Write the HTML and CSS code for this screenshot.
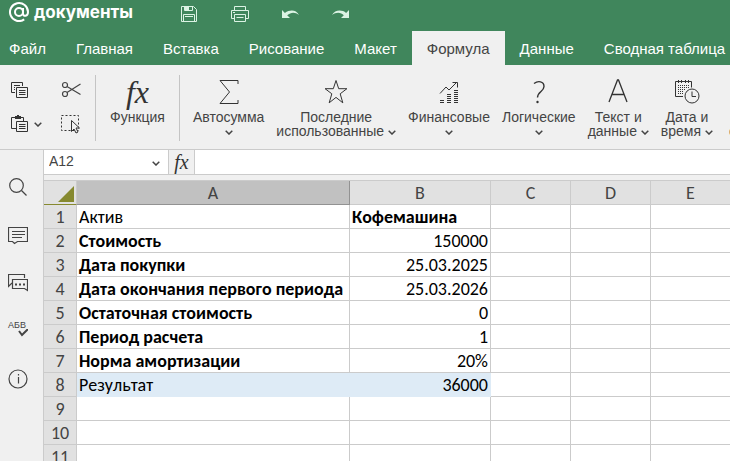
FILE: index.html
```
<!DOCTYPE html>
<html lang="ru">
<head>
    <meta charset="UTF-8">
    <meta name="viewport" content="width=device-width, initial-scale=1.0">
    <title>Документы</title>
    <link rel="stylesheet" href="styles.css">
</head>
<body>

    <header>
        <div class="topbar">
            <a href="#" class="logo">
                <svg width="21" height="20" viewBox="0 0 21 20" fill="none" stroke="#fff" stroke-width="2">
                    <circle cx="10" cy="10" r="4"/>
                    <path d="M14 6v5.500c0 3.500 5 3 5-1.500a9 9 0 1 0-3.800 7.400"/>
                </svg>
                <span>документы</span>
            </a>
            <div class="quick">
                <button type="button" aria-label="Сохранить">
                    <svg width="18" height="18" viewBox="0 0 18 18" fill="none" stroke="#dcf3e4">
                        <path d="M1.500 1.500h12l3 3v12h-15zM4.500 1.500v4h8v-4M3.500 16.500v-7h11v7M5 11.500h8"/>
                        <path d="M5 2h4v3H5z" fill="#dcf3e4" stroke="none"/>
                    </svg>
                </button>
                <button type="button" aria-label="Печать">
                    <svg width="20" height="18" viewBox="0 0 20 18" fill="none" stroke="#dcf3e4">
                        <path d="M4.500 5.500v-4h11v4M4.500 13.500h-3v-8h17v8h-3M4.500 9.500h11v7h-11zM3 7.500h2M6.500 12.500h7"/>
                    </svg>
                </button>
                <button type="button" aria-label="Отменить">
                    <svg width="18" height="18" viewBox="0 0 18 18" fill="#dcf3e4">
                        <path d="M0 5v8h8L5.200 10.200C9 7 13 6.800 17 10 14 4.500 8 4.500 2.900 7.900z"/>
                    </svg>
                </button>
                <button type="button" aria-label="Повторить">
                    <svg width="18" height="18" viewBox="0 0 18 18" fill="#dcf3e4">
                        <path d="M17 5v8H9l2.800-2.800C9 7 4 6.800 0 10 3 4.500 10 4.500 14.100 7.900z"/>
                    </svg>
                </button>
            </div>
        </div>
        <nav class="tabs">
            <a href="#">Файл</a>
            <a href="#">Главная</a>
            <a href="#">Вставка</a>
            <a href="#">Рисование</a>
            <a href="#">Макет</a>
            <a href="#" class="active">Формула</a>
            <a href="#">Данные</a>
            <a href="#">Сводная таблица</a>
        </nav>
    </header>

    <div class="ribbon">
        <div class="clipboard">
            <button type="button" aria-label="Копировать">
                <svg width="18" height="18" viewBox="0 0 18 18" fill="none" stroke="#333">
                    <path d="M4 11.500H.5V1.500h11V5M3 4.500h6M3 6.500h1M3 8.500h1"/>
                    <path d="M5.500 6.500h11v10h-11zM8 9.500h6.500M8 11.500h6.500M8 13.500h6.500"/>
                </svg>
            </button>
            <button type="button" aria-label="Вырезать">
                <svg width="20" height="18" viewBox="0 0 20 18" fill="none" stroke="#444" stroke-width="1.200">
                    <circle cx="4" cy="4" r="2.500"/>
                    <circle cx="4" cy="13" r="2.500"/>
                    <path d="M6 5.500L19.500 13.500M6 11.500L19.500 3"/>
                </svg>
            </button>
            <button type="button" aria-label="Вставить">
                <svg width="18" height="18" viewBox="0 0 18 18" fill="none" stroke="#333">
                    <path d="M5 13.500H.5v-11h12V6"/>
                    <path d="M4 1h2V0h2v1h2v3H4z" fill="#333" stroke="none"/>
                    <path d="M5.500 6.500h11v10h-11zM8 9.500h6.500M8 11.500h6.500M8 13.500h6.500"/>
                </svg>
                <svg class="chevron" width="8" height="5" viewBox="0 0 8 5"><path d="M.7.7L4 4 7.300.7"/></svg>
            </button>
            <button type="button" aria-label="Выделить">
                <svg width="20" height="20" viewBox="0 0 20 20" fill="none" stroke="#333">
                    <rect x=".5" y="1.500" width="17" height="15" stroke-dasharray="2 2"/>
                    <path d="M10.500 6.500v11l2.500-2.500 2 4 2-1-2-4h3.500z" fill="#f0f0f0"/>
                </svg>
            </button>
        </div>

        <div class="group">
            <button type="button" class="tool">
                <span class="icon fx">fx</span>
                <span>Функция</span>
            </button>
        </div>

        <div class="functions">
            <button type="button" class="tool">
                <svg class="icon" width="20" height="26" viewBox="0 0 20 26">
                    <path d="M19 5V1.500H1L10.500 13 1 24.500h18V21"/>
                </svg>
                <span>Автосумма</span>
                <svg class="chevron" width="8" height="5" viewBox="0 0 8 5"><path d="M.7.7L4 4 7.300.7"/></svg>
            </button>
            <button type="button" class="tool">
                <svg class="icon" width="24" height="26" viewBox="0 0 24 26">
                    <path d="M12 1.500l2.700 8.200h8.200l-6.700 5.100 2.600 9-6.800-5.400-6.800 5.400 2.600-9L1.100 9.700h8.200z"/>
                </svg>
                <span>Последние</span>
                <span>использованные <svg class="chevron" width="8" height="5" viewBox="0 0 8 5"><path d="M.7.7L4 4 7.300.7"/></svg></span>
            </button>
            <button type="button" class="tool">
                <svg class="icon" width="20" height="26" viewBox="0 0 20 26">
                    <path d="M1 14.500l6-6.500 3 3 8-8M13.500 3.500h5v5"/>
                    <path d="M1 21.500h4M1 23.500h4M8 15.500h4M8 17.500h4M8 19.500h4M8 21.500h4M8 23.500h4M15 11.500h4M15 13.500h4M15 15.500h4M15 17.500h4M15 19.500h4M15 21.500h4M15 23.500h4"/>
                </svg>
                <span>Финансовые</span>
                <svg class="chevron" width="8" height="5" viewBox="0 0 8 5"><path d="M.7.7L4 4 7.300.7"/></svg>
            </button>
            <button type="button" class="tool">
                <svg class="icon" width="14" height="26" viewBox="0 0 14 26">
                    <path d="M2 4.500C6 1.500 12 2 12 7.500c0 5-6.500 5-6.500 11" stroke-width="1.400"/>
                    <circle cx="5.500" cy="23" r="1.200" fill="#333" stroke="none"/>
                </svg>
                <span>Логические</span>
                <svg class="chevron" width="8" height="5" viewBox="0 0 8 5"><path d="M.7.7L4 4 7.300.7"/></svg>
            </button>
            <button type="button" class="tool">
                <svg class="icon" width="20" height="26" viewBox="0 0 20 26">
                    <path d="M1 23L9.500 1h1L19 23M4 15.500h12" stroke-width="1.300"/>
                </svg>
                <span>Текст и</span>
                <span>данные <svg class="chevron" width="8" height="5" viewBox="0 0 8 5"><path d="M.7.7L4 4 7.300.7"/></svg></span>
            </button>
            <button type="button" class="tool">
                <svg class="icon" width="26" height="26" viewBox="0 0 26 26">
                    <path d="M9 17.500H1.500V2.500h16v6M4.500 1v3M7.500 1v3M11.500 1v3M14.500 1v3"/>
                    <path d="M4 6.500h12M4 8.500h12M4 10.500h8M4 12.500h6M4 14.500h6" stroke-dasharray="1 1"/>
                    <circle cx="18" cy="17" r="7"/>
                    <path d="M18 12.500v5h4"/>
                </svg>
                <span>Дата и</span>
                <span>время <svg class="chevron" width="8" height="5" viewBox="0 0 8 5"><path d="M.7.7L4 4 7.300.7"/></svg></span>
            </button>
            <button type="button" class="tool last" aria-label="Ссылки">
                <span>с</span>
            </button>
        </div>
    </div>

    <div class="workspace">
        <aside>
            <button type="button" aria-label="Поиск">
                <svg width="20" height="20" viewBox="0 0 20 20">
                    <circle cx="8.500" cy="8.500" r="6.800"/>
                    <path d="M13.500 13.500l5 5"/>
                </svg>
            </button>
            <button type="button" aria-label="Комментарии">
                <svg width="20" height="20" viewBox="0 0 20 20">
                    <path d="M.5 2.500h19v14h-10l-3 2-2-2h-4zM4 6.500h13M4 9.500h13M4 12.500h10"/>
                </svg>
            </button>
            <button type="button" aria-label="Чат">
                <svg width="20" height="20" viewBox="0 0 20 20">
                    <path d="M4 10L.5 13.500v-12h16V5"/>
                    <path d="M4.500 6.500h15v11l-3-2h-12z"/>
                    <path d="M7 11.500h2M11 11.500h2M15 11.500h2" stroke-width="2"/>
                </svg>
            </button>
            <button type="button" class="spelling" aria-label="Орфография">
                <span>АБВ</span>
                <svg width="20" height="8" viewBox="0 0 20 8">
                    <path d="M11 2l3 4 6-6" stroke-width="2"/>
                </svg>
            </button>
            <button type="button" aria-label="Сведения">
                <svg width="20" height="20" viewBox="0 0 20 20">
                    <circle cx="10" cy="10" r="9"/>
                    <path d="M10.500 8v6.500M10.500 5v1.500"/>
                </svg>
            </button>
        </aside>

        <main>
            <div class="formula-bar">
                <input type="text" class="cell-name" value="A12" aria-label="Имя ячейки">
                <button type="button" class="open-names" aria-label="Список имён">
                    <svg class="chevron" width="8" height="5" viewBox="0 0 8 5"><path d="M.7.7L4 4 7.300.7"/></svg>
                </button>
                <button type="button" class="insert-fx">fx</button>
                <input type="text" class="formula" aria-label="Формула">
            </div>

            <table>
                <colgroup>
                    <col class="col-num">
                    <col class="col-a">
                    <col class="col-b">
                    <col class="col-c">
                    <col class="col-d">
                    <col>
                </colgroup>
                <thead>
                    <tr>
                        <th class="corner"><svg width="16" height="16" viewBox="0 0 16 16"><path d="M16 0v16H0z" fill="#86892f"/></svg></th>
                        <th class="current">A</th>
                        <th>B</th>
                        <th>C</th>
                        <th>D</th>
                        <th>E</th>
                    </tr>
                </thead>
                <tbody>
                    <tr><th>1</th><td>Актив</td><td class="bold">Кофемашина</td><td></td><td></td><td></td></tr>
                    <tr><th>2</th><td class="bold">Стоимость</td><td class="num">150000</td><td></td><td></td><td></td></tr>
                    <tr><th>3</th><td class="bold">Дата покупки</td><td class="num">25.03.2025</td><td></td><td></td><td></td></tr>
                    <tr><th>4</th><td class="bold">Дата окончания первого периода</td><td class="num">25.03.2026</td><td></td><td></td><td></td></tr>
                    <tr><th>5</th><td class="bold">Остаточная стоимость</td><td class="num">0</td><td></td><td></td><td></td></tr>
                    <tr><th>6</th><td class="bold">Период расчета</td><td class="num">1</td><td></td><td></td><td></td></tr>
                    <tr><th>7</th><td class="bold">Норма амортизации</td><td class="num">20%</td><td></td><td></td><td></td></tr>
                    <tr><th>8</th><td class="result">Результат</td><td class="num result">36000</td><td></td><td></td><td></td></tr>
                    <tr><th>9</th><td></td><td></td><td></td><td></td><td></td></tr>
                    <tr><th>10</th><td></td><td></td><td></td><td></td><td></td></tr>
                    <tr><th>11</th><td></td><td></td><td></td><td></td><td></td></tr>
                </tbody>
            </table>
        </main>
    </div>

</body>
</html>
```
FILE: styles.css
```
* {
    box-sizing: border-box;
}
html, body {
    height: 100%;
}
body {
    margin: 0;
    display: flex;
    flex-direction: column;
    overflow: hidden;
    font-family: "Liberation Sans", Arial, sans-serif;
    font-size: 14px;
    color: #444;
    background-color: #f0f0f0;
}
button {
    padding: 0;
    border: none;
    background: none;
    font: inherit;
    color: inherit;
    cursor: pointer;
}
input {
    min-width: 0;
    border: none;
    outline: none;
    font: inherit;
    color: inherit;
    background-color: #fff;
}
svg {
    flex: none;
}
.chevron {
    fill: none;
    stroke: #444;
    stroke-width: 1.5;
}

/* header */
header {
    flex: none;
    background-color: #40865c;
    color: #fff;
}
.topbar {
    display: flex;
    align-items: flex-start;
    height: 31px;
    padding-left: 9px;
}
.logo {
    display: flex;
    align-items: center;
    gap: 4px;
    width: 171px;
    height: 24px;
    color: #fff;
    font-family: Inter, sans-serif;
    font-size: 17px;
    font-weight: 700;
    text-decoration: none;
}
.quick {
    display: flex;
    align-items: center;
    gap: 32px;
    height: 27px;
}
.quick svg, .clipboard svg, aside svg {
    display: block;
}
.tabs {
    display: flex;
    height: 34px;
}
.tabs a {
    flex: none;
    padding: 0 15px;
    color: #fff;
    font-size: 15px;
    line-height: 36px;
    text-decoration: none;
}
.tabs a:first-child {
    padding-left: 9px;
}
.tabs a.active {
    color: #444;
    background-color: #f0f0f0;
}

/* ribbon */
.ribbon {
    display: flex;
    flex: none;
    height: 84px;
    overflow: hidden;
}
.clipboard {
    display: grid;
    grid-template-columns: 50px 34px;
    grid-template-rows: 34px 34px;
    align-content: start;
    padding: 8px 0 0 11px;
}
.clipboard button {
    display: flex;
    align-items: center;
    gap: 5px;
}
.group {
    margin: 10px 0 8px;
    padding: 0 8px;
    border-left: 1px solid #c4c4c4;
    border-right: 1px solid #c4c4c4;
}
.group .tool {
    padding-top: 4px;
}
.functions {
    display: flex;
    padding: 0 7px;
}
.tool {
    display: flex;
    flex: none;
    flex-direction: column;
    align-items: center;
    padding: 14px 6px 0;
    line-height: 14px;
    white-space: nowrap;
}
.tool .icon {
    margin-bottom: 5px;
    fill: none;
    stroke: #333;
}
.tool > .chevron {
    margin-top: 6px;
}
.tool span .chevron {
    vertical-align: middle;
}
.tool.last {
    padding: 59px 0 0 10px;
}
.fx, .insert-fx {
    color: #333;
    font-family: "Liberation Serif", "Times New Roman", serif;
    font-style: italic;
}
.fx {
    height: 26px;
    font-size: 32px;
    line-height: 26px;
}

/* side panel */
.workspace {
    display: flex;
    flex: 1;
    min-height: 0;
}
aside {
    flex: none;
    width: 43px;
    padding: 13px 0 0 8px;
    border-top: 1px solid #cbcbcb;
}
aside button {
    display: flex;
    align-items: center;
    height: 48px;
}
aside svg {
    fill: none;
    stroke: #444;
    stroke-width: 1.2;
}
aside .spelling {
    flex-direction: column;
    align-items: flex-start;
    justify-content: center;
    padding-bottom: 4px;
    font-size: 9px;
    line-height: 8px;
}

/* sheet */
main {
    flex: 1;
    min-width: 0;
    overflow: hidden;
    border-left: 1px solid #cbcbcb;
}
.formula-bar {
    display: flex;
    height: 26px;
    margin-bottom: 5px;
    border-top: 1px solid #cbcbcb;
    border-bottom: 1px solid #cbcbcb;
}
.cell-name {
    width: 100px;
    padding: 0 5px 2px;
}
.open-names {
    width: 24px;
    background-color: #fff;
}
.open-names svg {
    vertical-align: middle;
}
.insert-fx {
    width: 27px;
    border-left: 1px solid #cbcbcb;
    border-right: 1px solid #cbcbcb;
    font-size: 20px;
    line-height: 20px;
}
.formula {
    flex: 1;
}
table {
    width: 100%;
    table-layout: fixed;
    border-collapse: separate;
    border-spacing: 0;
    border-top: 1px solid #cbcbcb;
    background-color: #fff;
    font-family: Carlito, Lato, sans-serif;
    font-size: 18px;
    font-kerning: none;
    line-height: 21px;
    color: #000;
}
.col-num {
    width: 33px;
}
.col-a {
    width: 273px;
}
.col-b {
    width: 141px;
}
.col-c, .col-d {
    width: 80px;
}
th, td {
    height: 24px;
    padding: 2px 2px 0;
    border-right: 1px solid #cbcbcb;
    border-bottom: 1px solid #cbcbcb;
    white-space: nowrap;
}
th:last-child, td:last-child {
    border-right: none;
}
th {
    background-color: #e1e1e1;
    color: #444;
    font-weight: normal;
    text-align: center;
}
.current {
    background-color: #c1c1c1;
    border-color: #929292;
}
.corner {
    border-bottom-color: #86892f;
    text-align: right;
}
.corner svg {
    display: block;
    margin: 1px 0 0 auto;
}
.bold {
    font-weight: bold;
}
.num {
    text-align: right;
}
.result {
    background-color: #deebf6;
    border-color: #deebf6;
}
```
